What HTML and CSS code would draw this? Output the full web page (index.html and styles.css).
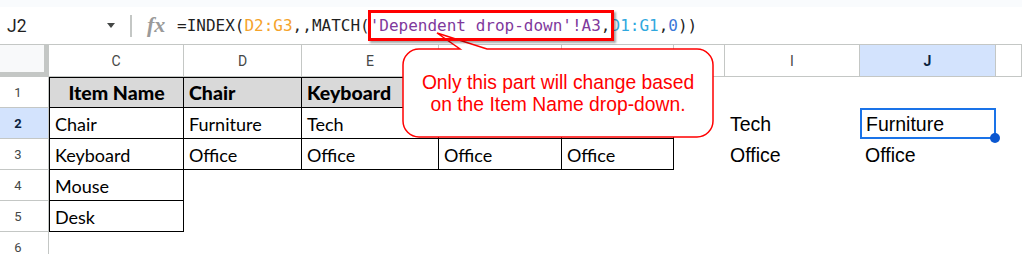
FILE: index.html
```html
<!DOCTYPE html>
<html lang="en">

<head>
    <meta charset="UTF-8">
    <meta name="viewport" content="width=device-width, initial-scale=1.0">
    <link rel="stylesheet" href="styles.css">
    <title>Dependent drop-down</title>
</head>

<body>
    <div class="page">
        <div class="top-strip"></div>

        <div class="formula-bar">
            <div class="name-box">J2</div>
            <div class="caret"></div>
            <div class="divider"></div>
            <div class="fx">fx</div>
            <div class="formula">=INDEX(<span class="ref-orange">D2:G3</span>,,MATCH(<span class="ref-purple">'Dependent drop-down'!A3</span>,<span class="ref-cyan">D1:G1</span>,<span class="num">0</span>))</div>
        </div>

        <div class="sheet">
            <!-- column headers -->
            <div class="corner"></div>
            <div class="col-head">C</div>
            <div class="col-head">D</div>
            <div class="col-head">E</div>
            <div class="col-head">F</div>
            <div class="col-head">G</div>
            <div class="col-head">H</div>
            <div class="col-head">I</div>
            <div class="col-head active">J</div>
            <div class="col-head"></div>

            <!-- row 1 (F1, G1 sit under the callout) -->
            <div class="row-head">1</div>
            <div class="cell t top left head center">Item Name</div>
            <div class="cell t top head">Chair</div>
            <div class="cell t top head">Keyboard</div>
            <div class="cell t top head"></div>
            <div class="cell t top head"></div>
            <div class="cell"></div>
            <div class="cell"></div>
            <div class="cell"></div>
            <div class="cell"></div>

            <!-- row 2 -->
            <div class="row-head active">2</div>
            <div class="cell t left">Chair</div>
            <div class="cell t">Furniture</div>
            <div class="cell t">Tech</div>
            <div class="cell t"></div>
            <div class="cell t"></div>
            <div class="cell"></div>
            <div class="cell out">Tech</div>
            <div class="cell out selected">Furniture</div>
            <div class="cell"></div>

            <!-- row 3 -->
            <div class="row-head">3</div>
            <div class="cell t left">Keyboard</div>
            <div class="cell t">Office</div>
            <div class="cell t">Office</div>
            <div class="cell t">Office</div>
            <div class="cell t">Office</div>
            <div class="cell"></div>
            <div class="cell out">Office</div>
            <div class="cell out">Office</div>
            <div class="cell"></div>

            <!-- row 4 -->
            <div class="row-head">4</div>
            <div class="cell t left">Mouse</div>
            <div class="cell"></div>
            <div class="cell"></div>
            <div class="cell"></div>
            <div class="cell"></div>
            <div class="cell"></div>
            <div class="cell"></div>
            <div class="cell"></div>
            <div class="cell"></div>

            <!-- row 5 -->
            <div class="row-head">5</div>
            <div class="cell t left">Desk</div>
            <div class="cell"></div>
            <div class="cell"></div>
            <div class="cell"></div>
            <div class="cell"></div>
            <div class="cell"></div>
            <div class="cell"></div>
            <div class="cell"></div>
            <div class="cell"></div>

            <!-- row 6 -->
            <div class="row-head">6</div>
            <div class="cell"></div>
            <div class="cell"></div>
            <div class="cell"></div>
            <div class="cell"></div>
            <div class="cell"></div>
            <div class="cell"></div>
            <div class="cell"></div>
            <div class="cell"></div>
            <div class="cell"></div>
        </div>

        <!-- annotation -->
        <div class="callout">
            <svg class="callout-shape" width="320" height="112" viewBox="0 0 320 112">
                <path d="M19,19 L60,19 L37,3 L87,19 L297,19 A16,16 0 0 1 313,35 L313,91 A16,16 0 0 1 297,107 L19,107 A16,16 0 0 1 3,91 L3,35 A16,16 0 0 1 19,19 Z"
                    fill="#fff" stroke="#ff0000" stroke-width="1.5" />
            </svg>
            <div class="callout-text">Only this part will change based<br>on the Item Name drop-down.</div>
        </div>
        <div class="highlight-box"></div>
    </div>
</body>

</html>
```

FILE: styles.css
```css
* {
    margin: 0;
    padding: 0;
    box-sizing: border-box;
}

body {
    background: #fff;
    font-family: Roboto, "Liberation Sans", sans-serif;
    overflow: hidden;
}

.page {
    position: relative;
    width: 1022px;
    height: 254px;
    overflow: hidden;
}

.top-strip {
    height: 7px;
    background: #f9fbfd;
}

/* formula bar */
.formula-bar {
    display: flex;
    align-items: center;
    height: 38px;
    border-bottom: 1px solid #c4c7c5;
}

.name-box {
    width: 107px;
    padding-left: 7px;
    font-size: 17.5px;
    color: #1f1f1f;
}

.caret {
    width: 0;
    height: 0;
    border-left: 4px solid transparent;
    border-right: 4px solid transparent;
    border-top: 5px solid #444746;
}

.divider {
    width: 2px;
    height: 22px;
    margin-left: 15px;
    background: #c4c7c5;
}

.fx {
    margin-left: 15px;
    width: 30px;
    font-family: "Liberation Serif", serif;
    font-style: italic;
    font-weight: bold;
    font-size: 22px;
    color: #9a9a9a;
    margin-top: -2px;
}

.formula {
    font-family: "DejaVu Sans Mono", monospace;
    font-size: 16px;
    color: #1f1f1f;
    white-space: nowrap;
}

.ref-orange { color: #f5a32b; }
.ref-purple { color: #80399c; }
.ref-cyan { color: #2fa8de; }
.num { color: #3c78d8; }

/* sheet grid */
.sheet {
    display: grid;
    grid-template-columns: 49px 135px 118px 137px 123px 112px 51px 135px 136px 26px;
    grid-template-rows: 32px repeat(6, 31px);
}

.corner {
    background: #f8f9fa;
    border-right: 5px solid #c4c7c5;
    border-bottom: 5px solid #c4c7c5;
}

.col-head {
    display: flex;
    align-items: center;
    justify-content: center;
    font-size: 14px;
    color: #444746;
    border-right: 1px solid #c4c7c5;
    border-bottom: 1px solid #c4c7c5;
}

.col-head.active,
.row-head.active {
    background: #d3e3fd;
    color: #0b1f3f;
    font-weight: bold;
}

.row-head {
    display: flex;
    align-items: center;
    justify-content: center;
    padding-right: 12px;
    font-size: 13px;
    color: #444746;
    border-right: 1px solid #c4c7c5;
    border-bottom: 1px solid #c4c7c5;
}

.cell {
    display: flex;
    align-items: center;
    padding: 2px 0 0 5px;
    font-family: Lato, "Liberation Sans", sans-serif;
    font-size: 18px;
    color: #000;
    white-space: nowrap;
    overflow: hidden;
}

.cell.t {
    border-right: 1px solid #000;
    border-bottom: 1px solid #000;
}

.cell.top {
    border-top: 1px solid #000;
}

.cell.left {
    border-left: 1px solid #000;
}

.cell.head {
    background: #d9d9d9;
    font-weight: 900;
    font-size: 19.5px;
    padding-top: 0;
}

.cell.center {
    justify-content: center;
    padding-left: 0;
}

.cell.out {
    font-family: "Liberation Sans", Arial, sans-serif;
    font-size: 19.5px;
    padding-left: 5px;
}

.cell.selected {
    position: relative;
    overflow: visible;
    border: 2px solid #1a73e8;
    padding-left: 4px;
}

.cell.selected::after {
    content: "";
    position: absolute;
    right: -6px;
    bottom: -6px;
    width: 10px;
    height: 10px;
    border-radius: 50%;
    background: #0b57d0;
}

/* annotation over the sheet */
.callout {
    position: absolute;
    left: 400px;
    top: 30px;
    width: 320px;
    height: 112px;
}

.callout-shape {
    display: block;
}

.callout-text {
    position: absolute;
    left: 3px;
    top: 19px;
    width: 310px;
    padding-top: 23px;
    text-align: center;
    font-family: "Liberation Sans", Arial, sans-serif;
    font-size: 19.3px;
    line-height: 22px;
    color: #ff0000;
}

.highlight-box {
    position: absolute;
    left: 368px;
    top: 10px;
    width: 246px;
    height: 31px;
    border: 3px solid #ff0000;
    box-shadow: 2px 2px 2px rgba(0, 0, 0, 0.35);
}
```
